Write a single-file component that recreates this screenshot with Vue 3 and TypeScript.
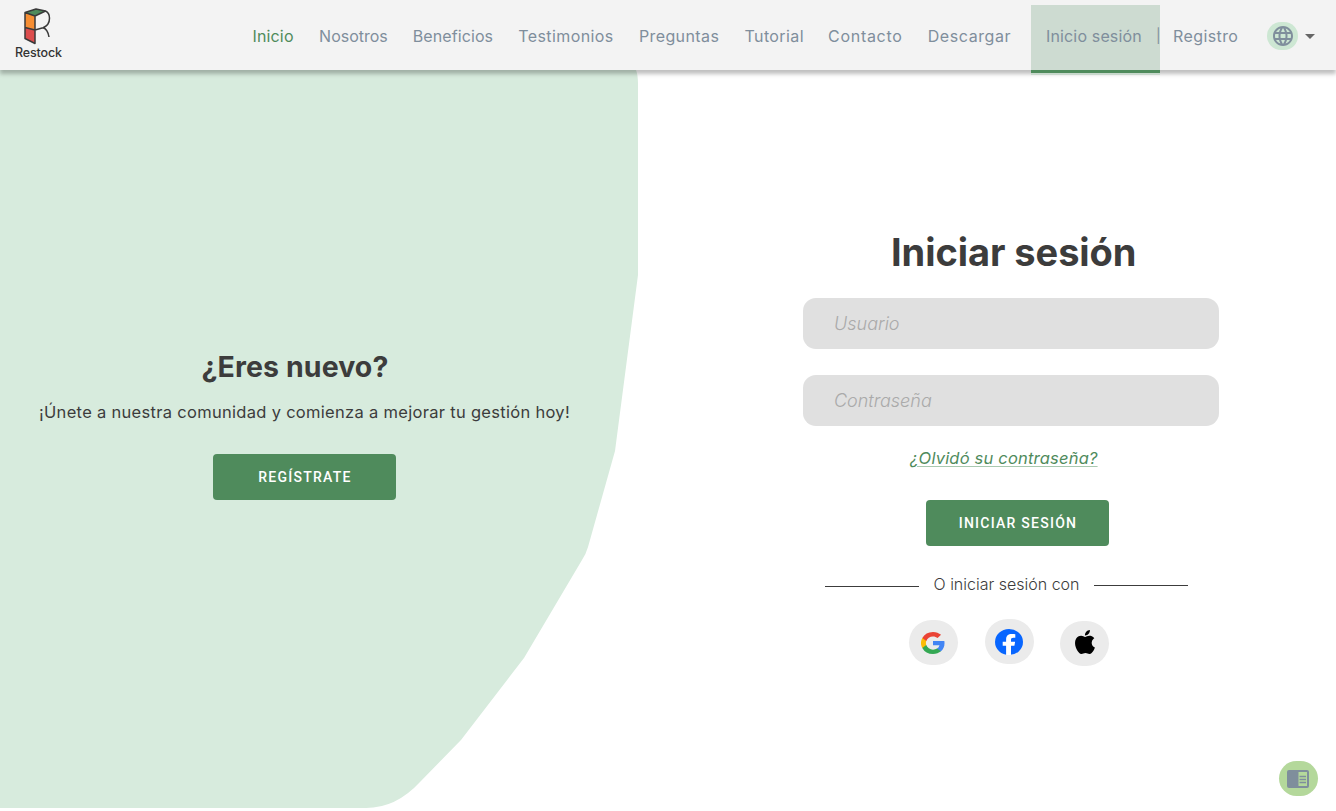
<script setup lang="ts">
interface NavItem {
  label: string
  tracking: number
  active?: boolean
}

const navItems: NavItem[] = [
  { label: 'Inicio', tracking: 0.15, active: true },
  { label: 'Nosotros', tracking: 0 },
  { label: 'Beneficios', tracking: 0.1 },
  { label: 'Testimonios', tracking: 0.4 },
  { label: 'Preguntas', tracking: 0.4 },
  { label: 'Tutorial', tracking: 0.4 },
  { label: 'Contacto', tracking: 0.7 },
  { label: 'Descargar', tracking: 0.6 },
]
</script>

<template>
  <div class="page">
    <header class="topbar">
      <a class="brand">
        <svg class="brand-mark" width="30" height="38" viewBox="0 0 30 38">
          <path d="M3 5.5 13 9v14L3 20.500z" fill="#f68e33" />
          <path d="M3 20.500 13 23v13.500L3 31.500z" fill="#dc4d4d" />
          <path d="M3 5.500 14 2l9.500 2L13 9z" fill="#4f8b5c" />
          <path d="M3 5.500 14 2l9.500 2L13 9zM3 5.500v26l10 5V9M3 20.500 13 23l8-2.300c5-2 6.500-5 6.500-9.500 0-4.200-1.200-6-4-7.200M21 20.700c3.800 1 5.200 4.500 6 9.300" fill="none" stroke="#3a3a3a" stroke-width="1.500" stroke-linejoin="round" />
        </svg>
        <span class="brand-name">Restock</span>
      </a>
      <nav class="nav">
        <a
          v-for="item in navItems"
          :key="item.label"
          :class="{ active: item.active }"
          :style="{ letterSpacing: item.tracking + 'px' }"
        >{{ item.label }}</a>
      </nav>
      <div class="current"><a>Inicio sesión</a><span class="bar">|</span></div>
      <a class="register">Registro</a>
      <div class="language">
        <span class="globe">
          <svg width="24" height="24" viewBox="0 0 24 24" fill="#7f8e9c">
            <path d="M11.990 2C6.470 2 2 6.480 2 12s4.470 10 9.990 10C17.520 22 22 17.520 22 12S17.520 2 11.990 2zm6.930 6h-2.950c-.32-1.250-.78-2.450-1.380-3.560 1.840.63 3.370 1.910 4.330 3.560zM12 4.040c.83 1.200 1.480 2.530 1.910 3.960h-3.820c.43-1.430 1.080-2.760 1.910-3.960zM4.260 14C4.100 13.360 4 12.690 4 12s.1-1.360.26-2h3.380c-.08.66-.14 1.320-.14 2s.06 1.340.14 2H4.260zm.82 2h2.950c.32 1.250.78 2.450 1.380 3.560-1.840-.63-3.370-1.900-4.330-3.560zm2.950-8H5.080c.96-1.660 2.490-2.930 4.330-3.560C8.810 5.550 8.350 6.750 8.030 8zM12 19.960c-.83-1.200-1.480-2.530-1.910-3.960h3.820c-.43 1.430-1.080 2.760-1.910 3.960zM14.340 14H9.660c-.09-.66-.16-1.320-.16-2s.07-1.350.16-2h4.680c.09.65.16 1.320.16 2s-.07 1.340-.16 2zm.25 5.560c.6-1.110 1.060-2.310 1.380-3.560h2.950c-.96 1.650-2.490 2.930-4.330 3.560zM16.360 14c.08-.66.14-1.320.14-2s-.06-1.340-.14-2h3.380c.16.64.26 1.310.26 2s-.1 1.360-.26 2h-3.380z" />
          </svg>
        </span>
        <span class="caret"></span>
      </div>
    </header>

    <main class="content">
      <section class="welcome">
        <h2>¿Eres nuevo?</h2>
        <p>¡Únete a nuestra comunidad y comienza a mejorar tu gestión hoy!</p>
        <button class="btn">REGÍSTRATE</button>
      </section>

      <section class="login">
        <h1>Iniciar sesión</h1>
        <input type="text" placeholder="Usuario" />
        <input type="password" placeholder="Contraseña" />
        <a class="forgot">¿Olvidó su contraseña?</a>
        <button class="btn">INICIAR SESIÓN</button>
        <div class="divider"><i></i><span>O iniciar sesión con</span><i class="line-end"></i></div>
        <div class="social">
          <a class="google">
            <svg width="24" height="22" viewBox="1 1 22 22" preserveAspectRatio="none">
              <path fill="#4285f4" d="M22.560 12.250c0-.78-.07-1.530-.2-2.250H12v4.260h5.920a5.060 5.060 0 0 1-2.200 3.320v2.770h3.570c2.080-1.920 3.270-4.740 3.270-8.100z" />
              <path fill="#34a853" d="M12 23c2.970 0 5.460-.98 7.280-2.660l-3.570-2.770c-.98.66-2.230 1.060-3.710 1.060-2.860 0-5.290-1.930-6.160-4.530H2.180v2.840A11 11 0 0 0 12 23z" />
              <path fill="#fbbc05" d="M5.840 14.090A6.600 6.600 0 0 1 5.490 12c0-.73.13-1.430.35-2.090V7.070H2.180a11 11 0 0 0 0 9.860l3.660-2.840z" />
              <path fill="#ea4335" d="M12 5.380c1.620 0 3.060.56 4.210 1.640l3.150-3.150C17.450 2.090 14.970 1 12 1a11 11 0 0 0-9.820 6.070l3.660 2.840C6.710 7.310 9.140 5.380 12 5.380z" />
            </svg>
          </a>
          <a class="facebook">
            <svg width="28" height="26" viewBox="0 0 28 26">
              <ellipse cx="14" cy="13" rx="14" ry="13" fill="#0866ff" />
              <path d="M11.100 26v-9.200H7.700v-4h3.400v-2.100c0-4 2-5.700 5.700-5.700 1.400 0 2.700.1 3.500.3v3.500c-.6-.1-1.300-.1-1.900-.1-1.900 0-2.400.8-2.400 2.300v1.800h4.100l-.7 4H16V26z" fill="#fff" />
            </svg>
          </a>
          <a class="apple">
            <svg width="20" height="24" viewBox="2.200 0 19.600 24" preserveAspectRatio="none">
              <path d="M12.152 6.896c-.948 0-2.415-1.078-3.960-1.040-2.040.027-3.910 1.183-4.961 3.014-2.117 3.675-.546 9.103 1.519 12.090 1.013 1.454 2.208 3.090 3.792 3.039 1.520-.065 2.090-.987 3.935-.987 1.831 0 2.350.987 3.960.948 1.637-.026 2.676-1.480 3.676-2.948 1.156-1.688 1.636-3.325 1.662-3.415-.039-.013-3.182-1.221-3.220-4.857-.026-3.040 2.480-4.494 2.597-4.559-1.429-2.090-3.623-2.324-4.390-2.376-2-.156-3.675 1.090-4.610 1.090zM15.530 3.830c.843-1.012 1.400-2.427 1.245-3.830-1.207.052-2.662.805-3.532 1.818-.78.896-1.454 2.338-1.273 3.714 1.338.104 2.715-.688 3.559-1.701" />
            </svg>
          </a>
        </div>
      </section>
    </main>

    <button class="reader" aria-label="Lector">
      <svg width="22" height="18" viewBox="0 0 22 18">
        <rect width="22" height="18" rx="2" fill="#7f8e9c" />
        <path d="M11.500 2H20v14h-8.500z" fill="#b4d89b" />
        <path d="M12.500 6.500h6.500M12.500 9.500h6.500M12.500 12.500h6.500" stroke="#7f8e9c" stroke-width="1.400" />
      </svg>
    </button>
  </div>
</template>

<style>
body { margin: 0; background: #fff; }
</style>

<style scoped>
* { box-sizing: border-box; }
.page { width: 1336px; height: 811px; overflow: hidden; display: flex; flex-direction: column; font-family: Inter, "Noto Sans", sans-serif; color: #3c3c3c; background: #fff; }
.topbar { position: relative; z-index: 1; flex: none; height: 70px; display: flex; background: #f3f3f3; box-shadow: 0 4px 4px rgba(0, 0, 0, .25); font-size: 16px; font-weight: 400; color: #7f8e9c; line-height: 24px; }
.brand { width: 253px; padding: 7px 0 0 15px; color: #333; }
.brand-mark { display: block; margin-left: 7px; }
.brand-name { display: block; font-size: 12.500px; line-height: 16px; font-weight: 500; letter-spacing: -.15px; }
.nav { width: 778px; padding-top: 24px; display: grid; grid-template-columns: 42px 69px 81px 96px 81px 59px 75px 84px; column-gap: 24.600px; white-space: nowrap; }
.nav a { margin-left: -.5px; }
.nav .active { color: #4f8b5c; }
.current { width: 129px; height: 70px; margin-top: 5px; padding: 19px 0 0 15px; display: flex; justify-content: space-between; overflow: hidden; letter-spacing: .15px; background: linear-gradient(#cddbd1 65px, #4f8b5c 65px, #4f8b5c 68px, #c8d8cc 68px); }
.bar { width: 4px; letter-spacing: 0; font-size: 14px; }
.register { width: 107px; padding: 24px 0 0 13px; letter-spacing: .4px; }
.language { display: flex; align-items: center; height: 72px; gap: 7px; }
.globe { width: 31px; height: 28px; border-radius: 14px; background: #cde7d3; display: grid; place-items: center; }
.caret { border: 5px solid transparent; border-top-color: #666; border-bottom: 0; }
.content { flex: 1; display: flex; }
.welcome { width: 638px; padding: 280px 0 0 39px; background: #d7ebdd; clip-path: path("M0 0H636Q638 5 638 14V205L615 381L588 477Q586 484 582 490L524 588L461 670L420 712Q396 738 366 738H0Z"); }
h1, h2, p { margin: 0; white-space: nowrap; }
h2 { width: 512px; font-size: 28.500px; line-height: 34px; letter-spacing: .1px; text-align: center; }
p { margin-top: 16px; font-size: 16.500px; line-height: 24px; font-weight: 400; letter-spacing: .3px; }
.btn { display: block; width: 183px; height: 46px; padding: 0 0 0 1px; border: 0; border-radius: 4px; background: #4f8b5c; color: #fff; font: 500 14px Roboto, sans-serif; letter-spacing: 1.250px; }
.welcome .btn { margin: 30px 0 0 174px; }
.login { padding: 157px 0 0 165px; width: 581px; }
h1 { margin-left: 88px; font-size: 38px; line-height: 50px; letter-spacing: -.06px; }
input { display: block; width: 416px; height: 51px; margin-top: 21px; padding: 0 31px; border: 0; border-radius: 13px; background: #e0e0e0; font: italic 300 18px Inter, sans-serif; outline: none; }
input + input { margin-top: 26px; }
input::placeholder { color: #aaa; opacity: 1; }
.forgot { display: block; width: 188px; margin: 21px 0 0 107px; font-size: 16.500px; line-height: 22px; letter-spacing: .2px; font-style: italic; color: #4f8b5c; text-decoration: underline; text-decoration-color: #a9c9b0; text-underline-offset: 2px; white-space: nowrap; }
.login .btn { margin: 31px 0 0 123px; }
.divider { margin: 26px 0 0 22px; width: 363px; display: flex; align-items: center; justify-content: space-between; font-size: 16px; line-height: 24px; font-weight: 300; white-space: nowrap; }
.divider i { width: 94px; height: 1px; background: #3c3c3c; margin-top: 4px; }
.divider .line-end { margin-top: 2px; }
.social { display: flex; margin: 23px 0 0 106px; gap: 27px; }
.social a { width: 49px; height: 45px; padding-right: 1px; border-radius: 23px; background: #ebebeb; display: grid; place-items: center; }
.social .google { margin-top: 1px; }
.social .apple { margin: 2px 0 0 -1px; padding: 0 0 4px; }
.reader { position: absolute; left: 1279px; top: 761px; width: 39px; height: 35px; border: 0; padding: 1px 1px 0 0; border-radius: 18px; background: #b4d89b; display: grid; place-items: center; }
</style>
